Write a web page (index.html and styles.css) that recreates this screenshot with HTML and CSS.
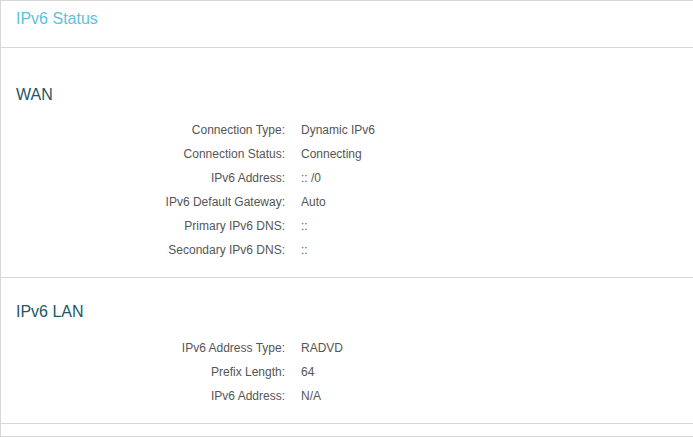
FILE: index.html
```html
<!DOCTYPE html>
<html>
<head>
<meta charset="utf-8">
<link rel="stylesheet" href="styles.css">
</head>
<body>
<div class="panel">
  <div class="panel-head"><h1 class="title">IPv6 Status</h1></div>
  <section class="section section-wan">
    <h2 class="section-title">WAN</h2>
    <div class="rows">
      <div class="label">Connection Type:</div><div class="value">Dynamic IPv6</div>
      <div class="label">Connection Status:</div><div class="value">Connecting</div>
      <div class="label">IPv6 Address:</div><div class="value">:: /0</div>
      <div class="label">IPv6 Default Gateway:</div><div class="value">Auto</div>
      <div class="label">Primary IPv6 DNS:</div><div class="value">::</div>
      <div class="label">Secondary IPv6 DNS:</div><div class="value">::</div>
    </div>
  </section>
  <section class="section section-lan">
    <h2 class="section-title">IPv6 LAN</h2>
    <div class="rows">
      <div class="label">IPv6 Address Type:</div><div class="value">RADVD</div>
      <div class="label">Prefix Length:</div><div class="value">64</div>
      <div class="label">IPv6 Address:</div><div class="value">N/A</div>
    </div>
  </section>
  <div class="panel-foot"></div>
</div>
</body>
</html>
```
FILE: styles.css
```css
html, body {
  margin: 0;
  padding: 0;
  background: #ffffff;
}
body {
  font-family: "Liberation Sans", Arial, sans-serif;
  width: 693px;
  height: 437px;
  overflow: hidden;
}
.panel {
  border-left: 1px solid #d6d6d6;
  border-top: 1px solid #d6d6d6;
}
.panel-head {
  height: 47px;
  border-bottom: 1px solid #d6d6d6;
  padding-left: 15px;
  box-sizing: border-box;
  padding-top: 8px;
}
.title {
  margin: 0;
  font-size: 16px;
  line-height: 20px;
  font-weight: normal;
  color: #5cc2d8;
}
.section {
  border-bottom: 1px solid #d6d6d6;
}
.section-wan {
  padding-top: 37px;
  padding-bottom: 15px;
}
.section-lan {
  padding-top: 24px;
  padding-bottom: 15px;
}
.section-title {
  margin: 0 0 0 15px;
  font-size: 16px;
  line-height: 20px;
  font-weight: normal;
  color: #1f5566;
}
.section-wan .section-title {
  margin-bottom: 13px;
}
.section-lan .section-title {
  margin-bottom: 14px;
}
.rows {
  display: grid;
  grid-template-columns: 284px auto;
  column-gap: 16px;
  font-size: 12px;
  line-height: 24px;
}
.label {
  text-align: right;
  color: #555555;
}
.value {
  color: #555555;
}
.panel-foot {
  height: 12px;
  border-bottom: 1px solid #d6d6d6;
}
```
